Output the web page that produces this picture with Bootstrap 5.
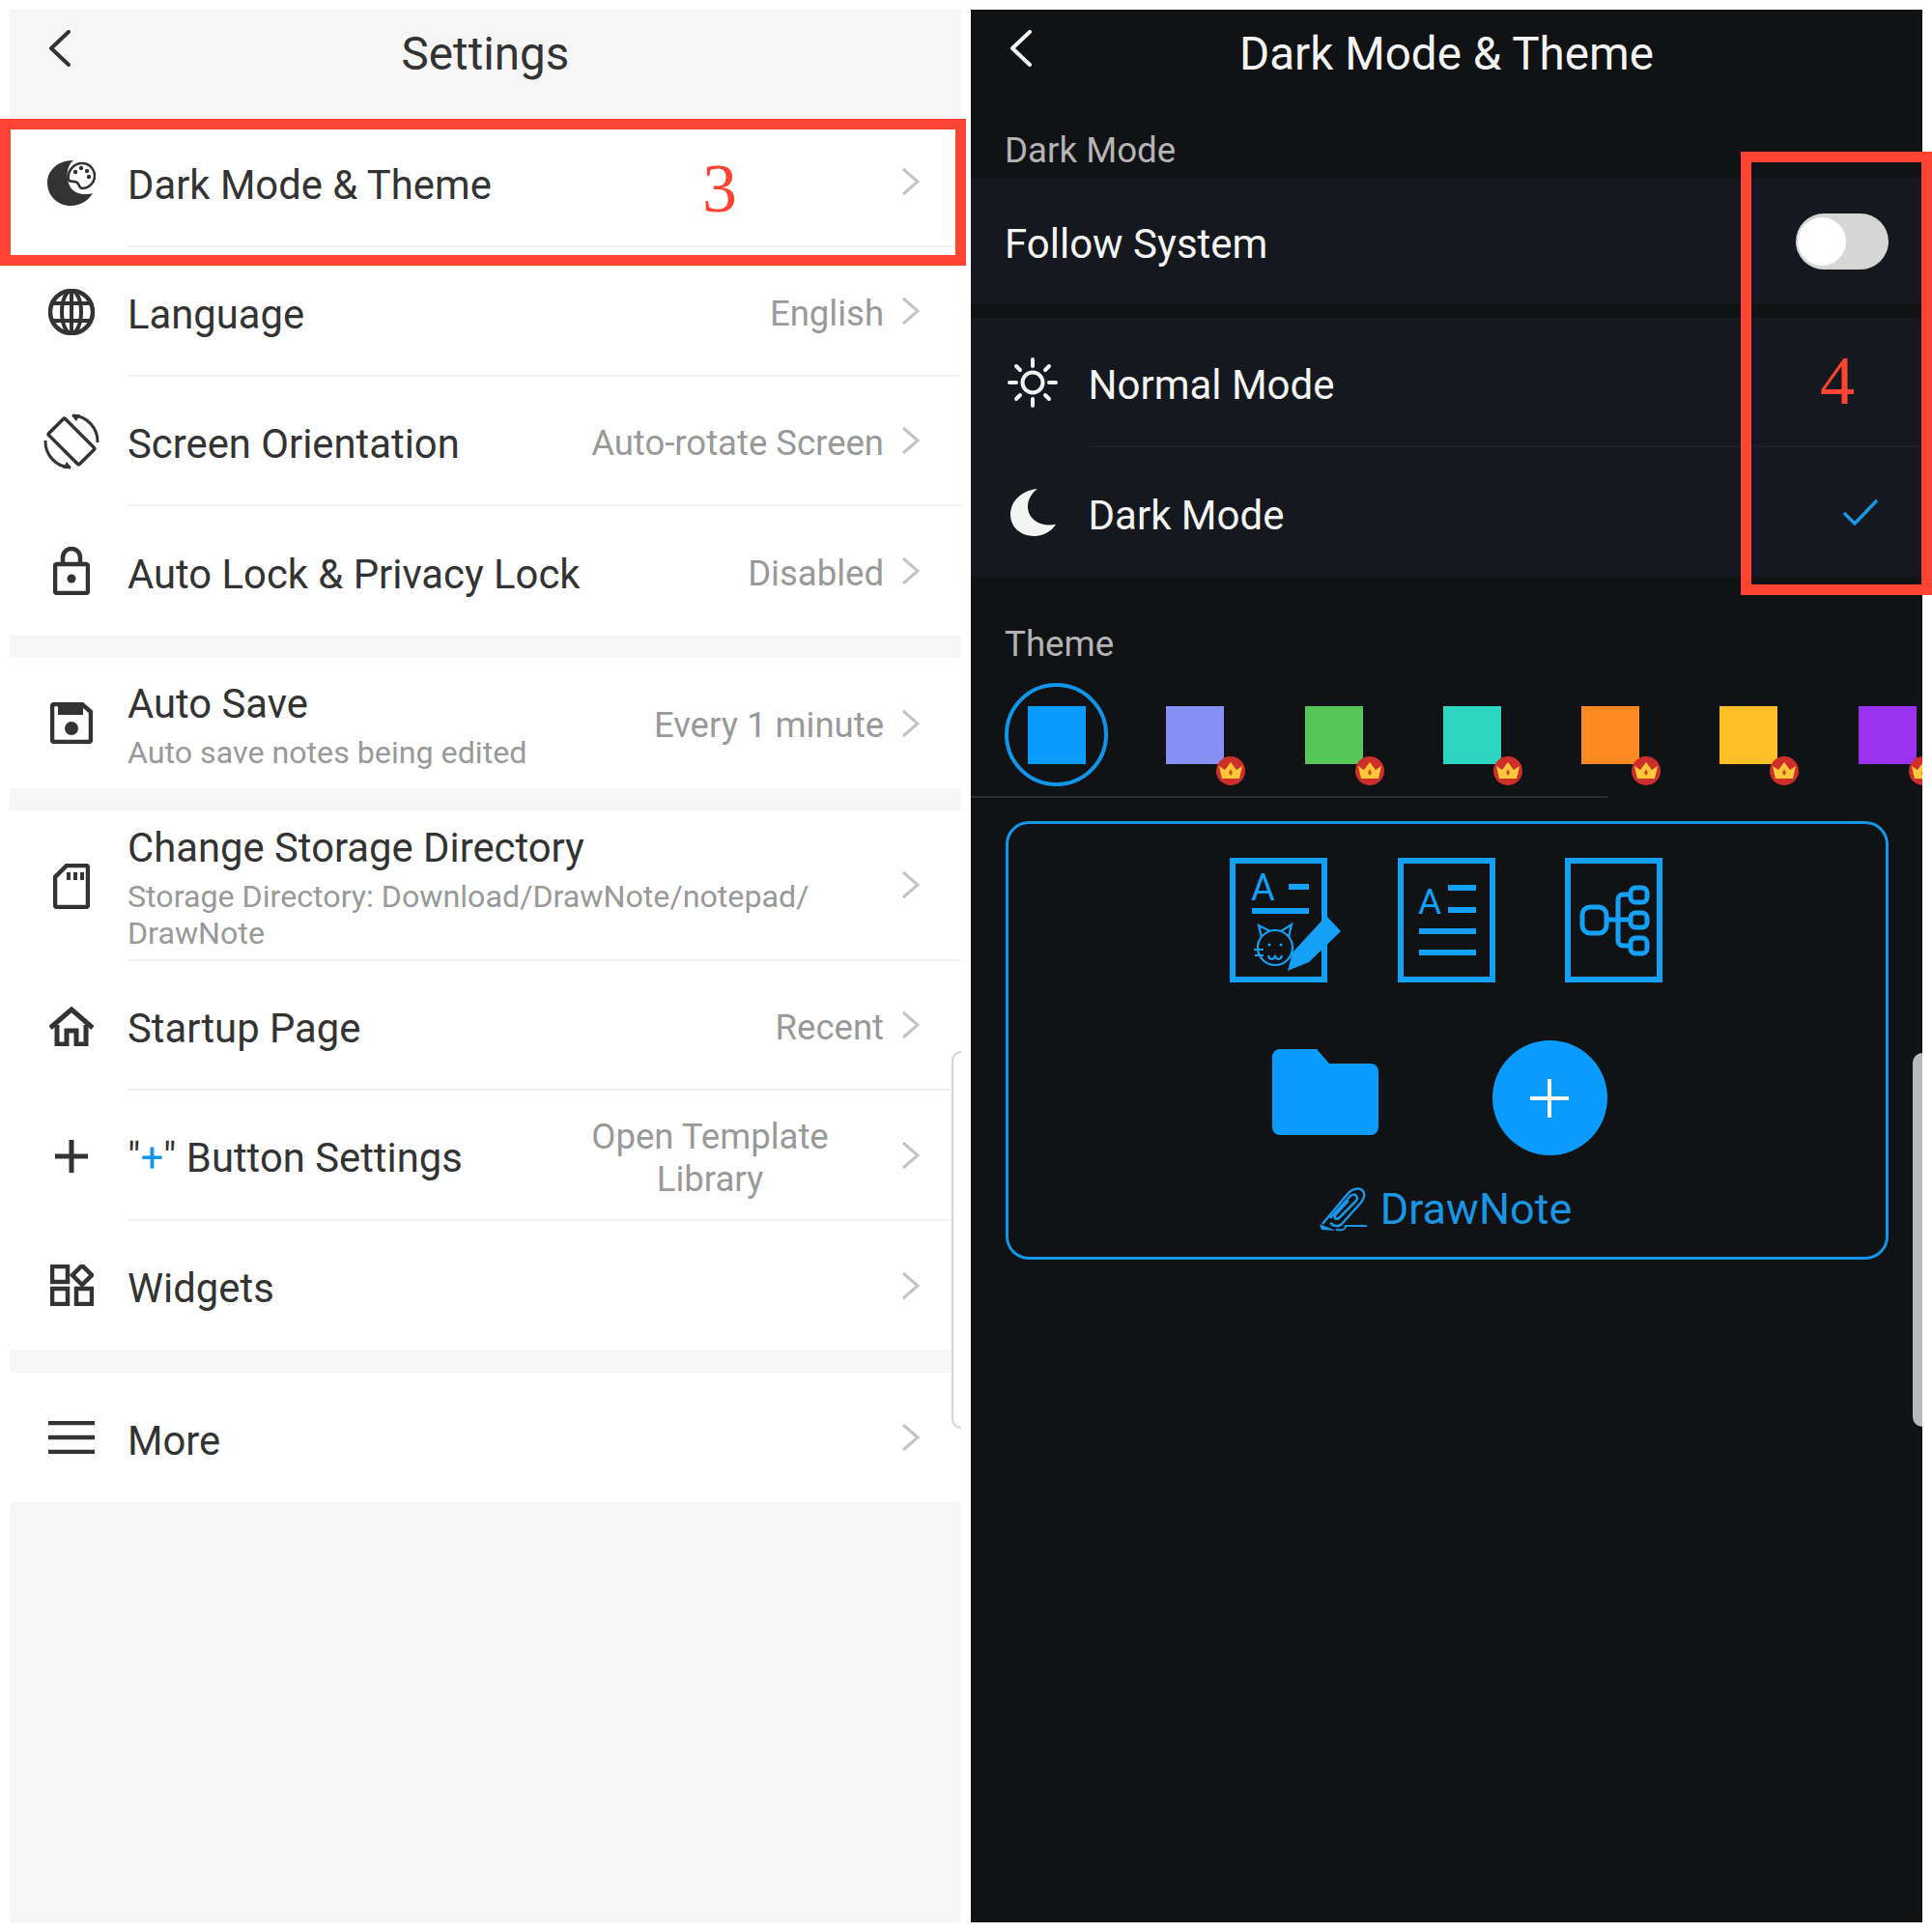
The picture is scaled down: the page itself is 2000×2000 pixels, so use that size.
<!DOCTYPE html>
<html lang="en">
<head>
  <meta charset="UTF-8" />
  <title>Settings and Dark Mode</title>
  <link href="https://cdn.jsdelivr.net/npm/bootstrap@5.3.0/dist/css/bootstrap.min.css" rel="stylesheet" />
  <style>
    body { background: #fff; margin: 0; font-family: Roboto, "Liberation Sans", sans-serif; }
    .shot { width: 2000px; height: 2000px; padding: 10px; gap: 10px; }
    .pane { width: 985px; height: 1980px; position: relative; }
    .pane-light { background: #f6f6f6; color: #333; }
    .pane-dark { background: #101214; color: #f4f4f4; }

    .top-bar { height: 112px; position: relative; }
    .top-title { font-size: 47.6px; line-height: 92px; }
    .back-arrow { position: absolute; left: 40px; top: 21px; }

    .group-light { background: #fff; }
    .gap-light { height: 23px; }
    .gap-light-wide { height: 24px; }
    .set-row { height: 134px; }
    .set-row-plus { height: 135px; }
    .set-row-short { height: 133px; }
    .set-row-tall { height: 156px; }
    .ico-cell { width: 108px; margin-left: 10px; margin-right: 4px; flex: none; }
    .set-body { padding-right: 43px; border-bottom: 2px solid #f1f1f1; min-width: 0; }
    .set-row:last-child .set-body { border-bottom: 0; }
    .set-title { font-size: 41.8px; line-height: 46px; padding-top: 7px; }
    .set-sub { font-size: 32.2px; line-height: 38px; color: #999; }
    .set-val { font-size: 36.5px; line-height: 44px; color: #999; margin-right: 18px; padding-top: 5px; white-space: nowrap; }
    .set-val-wrap { width: 266px; margin-right: 65px; padding-top: 6px; text-align: center; white-space: normal; }
    .plus-blue { color: #1296e8; }
    .edge-tab { position: absolute; right: 0; top: 1078px; width: 10px; height: 391px; border: 2px solid #d4d4d4; border-right: 0; border-radius: 12px 0 0 12px; background: #fff; }

    .mark-box { position: absolute; border: 11px solid #ff4433; }
    .mark-box-a { left: -10px; top: 113px; width: 1000px; height: 152px; }
    .mark-box-b { left: 797px; top: 147px; width: 198px; height: 459px; }
    .mark-num { position: absolute; font-family: "Liberation Serif", serif; font-size: 72px; line-height: 72px; color: #ff4433; }
    .mark-num-a { left: 717px; top: 149px; }
    .mark-num-b { left: 879px; top: 348px; }

    .sec-label { font-size: 36.7px; line-height: 40px; color: #b4b4b4; padding-left: 35px; }
    .sec-label-dark { height: 62px; padding-top: 14px; }
    .sec-label-theme { height: 110px; padding-top: 50px; }
    .card-dark { background: #15191f; }
    .dark-row { padding-left: 35px; padding-right: 45px; font-size: 42px; }
    .dark-row-follow { height: 130px; margin-bottom: 15px; padding-right: 35px; }
    .dark-row-mode { height: 134px; padding-left: 0; padding-right: 0; }
    .dark-ico { width: 121.5px; padding-left: 6.5px; flex: none; }
    .dark-body { padding-right: 45px; }
    .dark-text { padding-top: 7px; }
    .dark-line { border-bottom: 2px solid #1d2128; }
    .pill-switch { width: 96px; height: 58px; border-radius: 29px; background: #d6d6d6; padding: 4px 0 4px 2px; margin-top: 2px; }
    .pill-knob { width: 50px; height: 50px; border-radius: 50%; background: #fff; }

    .swatch-row { height: 117px; padding: 24px 0 0 59px; gap: 83.3px; overflow: hidden; }
    .swatch { width: 60px; height: 60px; flex: none; position: relative; }
    .swatch-ring { position: absolute; left: -24px; top: -24px; width: 107px; height: 107px; border: 4px solid #0f95ea; border-radius: 50%; }
    .crown { position: absolute; left: 52px; top: 52px; }
    .swatch-rule { width: 659px; height: 2px; background: #2a2c30; }

    .preview-box { margin: 24px 35px 0 36px; height: 454px; border: 3px solid #1296e8; border-radius: 24px; padding-top: 35px; }
    .doc-row { gap: 72.5px; padding-right: 2px; }
    .doc-ico { overflow: visible; display: block; }
    .fab-row { gap: 118px; margin-top: 60px; padding-right: 16px; }
    .folder-ico { margin-top: 9px; }
    .fab-dot { width: 119px; height: 119px; border-radius: 50%; background: #0a9bff; }
    .brand-row { margin-top: 30px; gap: 14px; padding-right: 4px; color: #1a96e6; font-size: 45px; line-height: 52px; }
    .edge-bar { position: absolute; right: 0; top: 1080px; width: 10px; height: 387px; background: #b9b9b9; border-radius: 10px 0 0 10px; }
  </style>
</head>
<body>
  <div class="shot d-flex">

    <!-- left screen -->
    <div class="pane pane-light">
      <div class="top-bar text-center">
        <svg class="back-arrow" width="24" height="38" viewBox="0 0 24 38"><path d="M21 2 3 19l18 17" fill="none" stroke="#333" stroke-width="4" stroke-linecap="round" stroke-linejoin="round"/></svg>
        <div class="top-title">Settings</div>
      </div>

      <div class="group-light">
        <div class="set-row d-flex">
          <div class="ico-cell d-flex align-items-center justify-content-center">
            <svg width="50" height="48" viewBox="0 0 50 48"><path d="M27 1C10 1 0 12 0 24c0 14 11 24 24 24 10 0 18-5 23-13-6 2-18 2-23-6C19 20 19 8 27 1Z" fill="#333"/><path d="M36 4a13 13 0 1 1 0 26c-3 0-3-4-5-6-3-2-8 0-9-3-2-8 5-17 14-17Z" fill="#fff" stroke="#333" stroke-width="2.600"/><circle cx="29" cy="13" r="2.200" fill="#333"/><circle cx="35" cy="9" r="2.200" fill="#333"/><circle cx="41" cy="12" r="2.200" fill="#333"/><circle cx="43" cy="18" r="2.200" fill="#333"/></svg>
          </div>
          <div class="set-body d-flex align-items-center flex-grow-1">
            <div class="set-title flex-grow-1">Dark Mode &amp; Theme</div>
            <svg width="19" height="30" viewBox="0 0 19 30"><path d="M2 2l15 13L2 28" fill="none" stroke="#c4c4c4" stroke-width="3"/></svg>
          </div>
        </div>
        <div class="set-row d-flex">
          <div class="ico-cell d-flex align-items-center justify-content-center">
            <svg width="48" height="48" viewBox="0 0 48 48" fill="none" stroke="#333" stroke-width="4.500"><circle cx="24" cy="24" r="22"/><ellipse cx="24" cy="24" rx="10" ry="22" stroke-width="4"/><path d="M5 15h38M5 33h38M24 2v44" stroke-width="4"/></svg>
          </div>
          <div class="set-body d-flex align-items-center flex-grow-1">
            <div class="set-title flex-grow-1">Language</div>
            <span class="set-val">English</span>
            <svg width="19" height="30" viewBox="0 0 19 30"><path d="M2 2l15 13L2 28" fill="none" stroke="#c4c4c4" stroke-width="3"/></svg>
          </div>
        </div>
        <div class="set-row d-flex">
          <div class="ico-cell d-flex align-items-center justify-content-center">
            <svg width="58" height="58" viewBox="0 0 58 58" fill="none" stroke="#333" stroke-width="3"><rect x="17" y="6.500" width="24" height="45" rx="1.500" transform="rotate(-45 29 29)" stroke-width="3.500"/><path d="M30 2a27 27 0 0 1 26 28M28 56A27 27 0 0 1 2 28"/><path d="M29 2l9-1-4 7ZM29 56l-9 1 4-7Z" fill="#333" stroke="none"/></svg>
          </div>
          <div class="set-body d-flex align-items-center flex-grow-1">
            <div class="set-title flex-grow-1">Screen Orientation</div>
            <span class="set-val">Auto-rotate Screen</span>
            <svg width="19" height="30" viewBox="0 0 19 30"><path d="M2 2l15 13L2 28" fill="none" stroke="#c4c4c4" stroke-width="3"/></svg>
          </div>
        </div>
        <div class="set-row d-flex">
          <div class="ico-cell d-flex align-items-center justify-content-center">
            <svg width="38" height="50" viewBox="0 0 38 50" fill="none" stroke="#333" stroke-width="4.500"><rect x="2" y="18" width="34" height="30" rx="2"/><path d="M10 18V11a9 9 0 0 1 18 0v7"/><circle cx="19" cy="33" r="4.500" fill="#333" stroke="none"/></svg>
          </div>
          <div class="set-body d-flex align-items-center flex-grow-1">
            <div class="set-title flex-grow-1">Auto Lock &amp; Privacy Lock</div>
            <span class="set-val">Disabled</span>
            <svg width="19" height="30" viewBox="0 0 19 30"><path d="M2 2l15 13L2 28" fill="none" stroke="#c4c4c4" stroke-width="3"/></svg>
          </div>
        </div>
      </div>
      <div class="gap-light"></div>

      <div class="group-light">
        <div class="set-row set-row-plus d-flex">
          <div class="ico-cell d-flex align-items-center justify-content-center">
            <svg width="44" height="43" viewBox="0 0 44 43"><path d="M4 2h29l9 8v29a2 2 0 0 1-2 2H4a2 2 0 0 1-2-2V4a2 2 0 0 1 2-2Z" fill="none" stroke="#333" stroke-width="4.500"/><rect x="8" y="4" width="26" height="9" fill="#333"/><circle cx="22" cy="27" r="7" fill="#333"/></svg>
          </div>
          <div class="set-body d-flex align-items-center flex-grow-1">
            <div class="flex-grow-1">
              <div class="set-title">Auto Save</div>
              <div class="set-sub mt-2">Auto save notes being edited</div>
            </div>
            <span class="set-val">Every 1 minute</span>
            <svg width="19" height="30" viewBox="0 0 19 30"><path d="M2 2l15 13L2 28" fill="none" stroke="#c4c4c4" stroke-width="3"/></svg>
          </div>
        </div>
      </div>
      <div class="gap-light"></div>

      <div class="group-light">
        <div class="set-row set-row-tall d-flex">
          <div class="ico-cell d-flex align-items-center justify-content-center">
            <svg width="38" height="47" viewBox="0 0 38 47"><path d="M14 2h20a2 2 0 0 1 2 2v39a2 2 0 0 1-2 2H4a2 2 0 0 1-2-2V14Z" fill="none" stroke="#333" stroke-width="4.500"/><path d="M14 9h4v8h-4zM21 9h4v8h-4zM28 9h4v8h-4z" fill="#333"/></svg>
          </div>
          <div class="set-body d-flex align-items-center flex-grow-1">
            <div class="flex-grow-1">
              <div class="set-title">Change Storage Directory</div>
              <div class="set-sub mt-2">Storage Directory: Download/DrawNote/notepad/<br>DrawNote</div>
            </div>
            <svg width="19" height="30" viewBox="0 0 19 30"><path d="M2 2l15 13L2 28" fill="none" stroke="#c4c4c4" stroke-width="3"/></svg>
          </div>
        </div>
        <div class="set-row d-flex">
          <div class="ico-cell d-flex align-items-center justify-content-center">
            <svg width="46" height="41" viewBox="0 0 46 41" fill="none" stroke="#333" stroke-width="5"><path d="M1 22 23 3l22 19"/><path d="M8 19v20h10V25h10v14h10V19"/></svg>
          </div>
          <div class="set-body d-flex align-items-center flex-grow-1">
            <div class="set-title flex-grow-1">Startup Page</div>
            <span class="set-val">Recent</span>
            <svg width="19" height="30" viewBox="0 0 19 30"><path d="M2 2l15 13L2 28" fill="none" stroke="#c4c4c4" stroke-width="3"/></svg>
          </div>
        </div>
        <div class="set-row set-row-plus d-flex">
          <div class="ico-cell d-flex align-items-center justify-content-center">
            <svg width="34" height="34" viewBox="0 0 34 34"><path d="M17 0v34M0 17h34" stroke="#333" stroke-width="5"/></svg>
          </div>
          <div class="set-body d-flex align-items-center flex-grow-1">
            <div class="set-title flex-grow-1">"<span class="plus-blue">+</span>" Button Settings</div>
            <span class="set-val set-val-wrap">Open Template Library</span>
            <svg width="19" height="30" viewBox="0 0 19 30"><path d="M2 2l15 13L2 28" fill="none" stroke="#c4c4c4" stroke-width="3"/></svg>
          </div>
        </div>
        <div class="set-row set-row-short d-flex">
          <div class="ico-cell d-flex align-items-center justify-content-center">
            <svg width="45" height="43" viewBox="0 0 45 43" fill="none" stroke="#333" stroke-width="4.500"><rect x="2" y="2" width="16" height="16"/><rect x="2" y="25" width="16" height="16"/><rect x="27" y="25" width="16" height="16"/><path d="M33 1l10 10-10 10-10-10Z"/></svg>
          </div>
          <div class="set-body d-flex align-items-center flex-grow-1">
            <div class="set-title flex-grow-1">Widgets</div>
            <svg width="19" height="30" viewBox="0 0 19 30"><path d="M2 2l15 13L2 28" fill="none" stroke="#c4c4c4" stroke-width="3"/></svg>
          </div>
        </div>
      </div>
      <div class="gap-light-wide"></div>

      <div class="group-light">
        <div class="set-row d-flex">
          <div class="ico-cell d-flex align-items-center justify-content-center">
            <svg width="48" height="34" viewBox="0 0 48 34"><path d="M0 2h48M0 17h48M0 32h48" stroke="#333" stroke-width="4.500"/></svg>
          </div>
          <div class="set-body d-flex align-items-center flex-grow-1">
            <div class="set-title flex-grow-1">More</div>
            <svg width="19" height="30" viewBox="0 0 19 30"><path d="M2 2l15 13L2 28" fill="none" stroke="#c4c4c4" stroke-width="3"/></svg>
          </div>
        </div>
      </div>

      <div class="edge-tab"></div>
      <div class="mark-box mark-box-a"></div>
      <div class="mark-num mark-num-a">3</div>
    </div>

    <!-- right screen -->
    <div class="pane pane-dark">
      <div class="top-bar text-center">
        <svg class="back-arrow" width="24" height="38" viewBox="0 0 24 38"><path d="M21 2 3 19l18 17" fill="none" stroke="#f4f4f4" stroke-width="4" stroke-linecap="round" stroke-linejoin="round"/></svg>
        <div class="top-title">Dark Mode &amp; Theme</div>
      </div>

      <div class="sec-label sec-label-dark">Dark Mode</div>
      <div class="card-dark dark-row dark-row-follow d-flex align-items-center justify-content-between">
        <span class="dark-text">Follow System</span>
        <div class="pill-switch"><div class="pill-knob"></div></div>
      </div>
      <div class="card-dark">
        <div class="dark-row dark-row-mode d-flex align-items-stretch">
          <div class="dark-ico d-flex align-items-center justify-content-center">
            <svg width="54" height="54" viewBox="0 0 54 54" fill="none" stroke="#f4f4f4" stroke-width="4" stroke-linecap="round"><circle cx="27" cy="27" r="10.500"/><path d="M27 3v7M27 44v7M3 27h7M44 27h7M10 10l4 4M40 40l4 4M44 10l-4 4M14 40l-4 4"/></svg>
          </div>
          <div class="dark-body dark-line d-flex align-items-center flex-grow-1"><span class="dark-text">Normal Mode</span></div>
        </div>
        <div class="dark-row dark-row-mode d-flex align-items-stretch">
          <div class="dark-ico d-flex align-items-center justify-content-center">
            <svg width="47" height="50" viewBox="0 0 44 49" preserveAspectRatio="none"><path d="M26 1C10 3 0 14 0 27c0 13 10 22 23 22 9 0 17-5 21-12-14 3-25-4-27-15-1-9 3-16 9-21Z" fill="#f4f4f4"/></svg>
          </div>
          <div class="dark-body d-flex align-items-center justify-content-between flex-grow-1">
            <span class="dark-text">Dark Mode</span>
            <svg width="38" height="29" viewBox="0 0 38 29"><path d="M2 15l11 11L36 2" fill="none" stroke="#1a96e6" stroke-width="3.500"/></svg>
          </div>
        </div>
      </div>

      <div class="sec-label sec-label-theme">Theme</div>
      <div class="swatch-row d-flex">
        <div class="swatch" style="background:#0a9bff"><div class="swatch-ring"></div></div>
        <div class="swatch" style="background:#8791f5"><svg class="crown" width="30" height="30" viewBox="0 0 30 30"><circle cx="15" cy="15" r="15" fill="#cf2f2a"/><path d="M3 10l6 4 6-8 6 8 6-4-3 13H6Z" fill="#ffc83a"/><path d="M15 13l2 4-2 3-2-3Z" fill="#c9501f"/></svg></div>
        <div class="swatch" style="background:#57c75a"><svg class="crown" width="30" height="30" viewBox="0 0 30 30"><circle cx="15" cy="15" r="15" fill="#cf2f2a"/><path d="M3 10l6 4 6-8 6 8 6-4-3 13H6Z" fill="#ffc83a"/><path d="M15 13l2 4-2 3-2-3Z" fill="#c9501f"/></svg></div>
        <div class="swatch" style="background:#2dd6c0"><svg class="crown" width="30" height="30" viewBox="0 0 30 30"><circle cx="15" cy="15" r="15" fill="#cf2f2a"/><path d="M3 10l6 4 6-8 6 8 6-4-3 13H6Z" fill="#ffc83a"/><path d="M15 13l2 4-2 3-2-3Z" fill="#c9501f"/></svg></div>
        <div class="swatch" style="background:#ff8a24"><svg class="crown" width="30" height="30" viewBox="0 0 30 30"><circle cx="15" cy="15" r="15" fill="#cf2f2a"/><path d="M3 10l6 4 6-8 6 8 6-4-3 13H6Z" fill="#ffc83a"/><path d="M15 13l2 4-2 3-2-3Z" fill="#c9501f"/></svg></div>
        <div class="swatch" style="background:#ffbf27"><svg class="crown" width="30" height="30" viewBox="0 0 30 30"><circle cx="15" cy="15" r="15" fill="#cf2f2a"/><path d="M3 10l6 4 6-8 6 8 6-4-3 13H6Z" fill="#ffc83a"/><path d="M15 13l2 4-2 3-2-3Z" fill="#c9501f"/></svg></div>
        <div class="swatch" style="background:#9a33f0"><svg class="crown" width="30" height="30" viewBox="0 0 30 30"><circle cx="15" cy="15" r="15" fill="#cf2f2a"/><path d="M3 10l6 4 6-8 6 8 6-4-3 13H6Z" fill="#ffc83a"/><path d="M15 13l2 4-2 3-2-3Z" fill="#c9501f"/></svg></div>
      </div>
      <div class="swatch-rule"></div>

      <div class="preview-box">
        <div class="doc-row d-flex justify-content-center">
          <svg class="doc-ico" width="101" height="129" viewBox="0 0 101 129" fill="none" stroke="#14a0f7" stroke-width="6">
            <rect x="3" y="3" width="95" height="123"/>
            <text x="22" y="44" font-family="Roboto, sans-serif" font-size="38" fill="#14a0f7" stroke="none">A</text>
            <path d="M61 30h21M23 55h59"/>
            <g stroke-width="2.200"><circle cx="47" cy="93" r="18"/><path d="M33 82l-3-12 12 6M61 82l3-13-11 7M25 95h10M26 101h9M40 101c1 5 5 5 7 1 2 4 6 4 7-1"/></g>
            <circle cx="41" cy="90" r="1.500" fill="#14a0f7" stroke="none"/><circle cx="53" cy="90" r="1.500" fill="#14a0f7" stroke="none"/>
            <path d="M100 60l15 16-33 32-22 9 5-19Z" fill="#14a0f7" stroke="none"/>
          </svg>
          <svg class="doc-ico" width="101" height="129" viewBox="0 0 101 129" fill="none" stroke="#14a0f7" stroke-width="6">
            <rect x="3" y="3" width="95" height="123"/>
            <text x="21" y="58" font-family="Roboto, sans-serif" font-size="37" fill="#14a0f7" stroke="none">A</text>
            <path d="M52 31h29M52 54h29M22 76h59M22 98h59"/>
          </svg>
          <svg class="doc-ico" width="101" height="129" viewBox="0 0 101 129" fill="none" stroke="#14a0f7" stroke-width="6">
            <rect x="3" y="3" width="95" height="123"/>
            <g stroke-width="5"><rect x="18" y="51" width="25" height="27" rx="8"/><rect x="68" y="31" width="17" height="15" rx="5"/><rect x="68" y="57" width="17" height="15" rx="5"/><rect x="68" y="83" width="17" height="16" rx="5"/><path d="M43 64h25M68 38H60a5 5 0 0 0-5 5v43a5 5 0 0 0 5 5h8"/></g>
          </svg>
        </div>
        <div class="fab-row d-flex justify-content-center align-items-start">
          <svg class="folder-ico" width="110" height="89" viewBox="0 0 110 89"><path d="M8 0h38l13 15h43a8 8 0 0 1 8 8v58a8 8 0 0 1-8 8H8a8 8 0 0 1-8-8V8a8 8 0 0 1 8-8Z" fill="#0a9bff"/></svg>
          <div class="fab-dot d-flex align-items-center justify-content-center">
            <svg width="40" height="40" viewBox="0 0 40 40"><path d="M20 0v40M0 20h40" stroke="#fff" stroke-width="4"/></svg>
          </div>
        </div>
        <div class="brand-row d-flex justify-content-center align-items-center">
          <svg width="50" height="47" viewBox="0 0 50 47" fill="none" stroke="#1a96e6" stroke-width="2.500"><path d="M4 38 30 7c5-6 13-7 16-3s1 8-3 13L24 38c-3 3-8 3-12-1"/><path d="M12 32 32 10c3-3 6-3 7-1 2 2 1 4-1 6L22 31c-2 2-4 2-5 1-1-2 0-3 1-4l13-14"/><path d="M1 38l2 6 15 1Z" fill="#1a96e6" stroke="none"/><path d="M18 44c6 1 10 0 10-4h22" stroke-width="2"/></svg>
          <span>DrawNote</span>
        </div>
      </div>

      <div class="edge-bar"></div>
      <div class="mark-box mark-box-b"></div>
      <div class="mark-num mark-num-b">4</div>
    </div>
  </div>
  <script src="https://cdn.jsdelivr.net/npm/bootstrap@5.3.0/dist/js/bootstrap.bundle.min.js"></script>
</body>
</html>
